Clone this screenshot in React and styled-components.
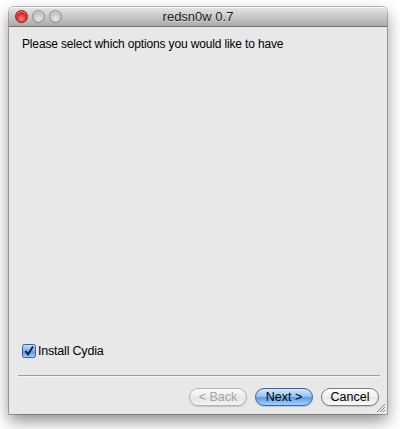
import styled, { createGlobalStyle } from 'styled-components';

const GlobalStyle = createGlobalStyle`
  html, body {
    margin: 0;
    padding: 0;
    background: #ffffff;
  }
  body {
    font-family: "Liberation Sans", "DejaVu Sans", sans-serif;
  }
`;

const Page = styled.div`
  width: 400px;
  height: 429px;
  box-sizing: border-box;
  padding: 7px 13px 15px 9px;
  overflow: hidden;
`;

const Window = styled.div`
  width: 378px;
  height: 407px;
  display: flex;
  flex-direction: column;
  background: #e8e8e8;
  border-radius: 5px 5px 0 0;
  box-shadow: 0 7px 16px rgba(0, 0, 0, 0.45), 0 0 0 1px rgba(0, 0, 0, 0.25);
  position: relative;
`;

const TitleBar = styled.div`
  height: 19px;
  flex: none;
  display: flex;
  align-items: center;
  position: relative;
  border-radius: 5px 5px 0 0;
  background: linear-gradient(#e6e6e6, #c9c9c9 50%, #a9a9a9);
  border-bottom: 1px solid #6f6f6f;
  box-shadow: inset 0 1px 0 rgba(255, 255, 255, 0.7);
`;

const Lights = styled.div`
  display: flex;
  gap: 4px;
  padding-left: 6px;
`;

const Light = styled.span`
  width: 13px;
  height: 13px;
  border-radius: 50%;
  box-sizing: border-box;
  border: 1px solid ${(p) => (p.red ? '#8f1b1b' : '#8a8a8a')};
  background: ${(p) =>
    p.red
      ? 'radial-gradient(circle at 50% 70%, #ff8a8a 0%, #e41c1c 55%, #a30b0b 100%)'
      : 'radial-gradient(circle at 50% 70%, #e9e9e9 0%, #c4c4c4 55%, #9c9c9c 100%)'};
  box-shadow: inset 0 1px 1px rgba(255, 255, 255, 0.6);
`;

const Title = styled.div`
  position: absolute;
  left: 0;
  right: 0;
  text-align: center;
  font-size: 13px;
  color: #1a1a1a;
  text-shadow: 0 1px 0 rgba(255, 255, 255, 0.5);
`;

const Content = styled.div`
  flex: 1;
  display: flex;
  flex-direction: column;
  padding: 10px 7px 8px 9px;
`;

const Prompt = styled.div`
  font-size: 12px;
  letter-spacing: -0.15px;
  color: #000;
  padding-left: 4px;
  line-height: 15px;
`;

const Spacer = styled.div`
  flex: 1;
`;

const CheckRow = styled.label`
  display: flex;
  align-items: center;
  gap: 2px;
  padding-left: 4px;
  font-size: 12.5px;
  letter-spacing: -0.2px;
  color: #000;
  height: 14px;
`;

const Separator = styled.div`
  margin-top: 17px;
  height: 1px;
  background: #9d9d9d;
  border-bottom: 1px solid #f6f6f6;
`;

const Buttons = styled.div`
  display: flex;
  justify-content: flex-end;
  gap: 8px;
  margin-top: 11px;
  padding-right: 1px;
`;

const Button = styled.div`
  width: 58px;
  height: 18px;
  box-sizing: border-box;
  border-radius: 9px;
  display: flex;
  align-items: center;
  justify-content: center;
  font-size: 12.5px;
  border: 1px solid ${(p) => (p.primary ? '#3d64a8' : p.disabled ? '#b2b2b2' : '#7c7c7c')};
  color: ${(p) => (p.disabled ? '#a4a4a4' : '#000')};
  background: ${(p) =>
    p.primary
      ? 'linear-gradient(#d7e9fb, #8fc0f2 50%, #5d9ce8 52%, #9fd1fb)'
      : p.disabled
      ? 'linear-gradient(#fbfbfb, #ececec 50%, #e4e4e4 52%, #f4f4f4)'
      : 'linear-gradient(#ffffff, #f1f1f1 50%, #e6e6e6 52%, #fafafa)'};
  box-shadow: 0 1px 1px rgba(0, 0, 0, 0.15);
`;

const Grip = styled.svg`
  position: absolute;
  right: 1px;
  bottom: 1px;
`;

function CheckBox() {
  return (
    <svg width="14" height="14" viewBox="0 0 14 14">
      <defs>
        <linearGradient id="cb" x1="0" y1="0" x2="0" y2="1">
          <stop offset="0" stopColor="#c8e0fa" />
          <stop offset="0.5" stopColor="#7fb2ec" />
          <stop offset="0.55" stopColor="#5b97e3" />
          <stop offset="1" stopColor="#a5d2fb" />
        </linearGradient>
      </defs>
      <rect x="0.5" y="0.5" width="13" height="13" rx="2" fill="url(#cb)" stroke="#38609e" />
      <path d="M3.5 7 L6 10.5 L11 2.5" fill="none" stroke="#0b1a33" strokeWidth="1.8" />
    </svg>
  );
}

export default function App() {
  return (
    <Page>
      <GlobalStyle />
      <Window>
        <TitleBar>
          <Lights>
            <Light red />
            <Light />
            <Light />
          </Lights>
          <Title>redsn0w 0.7</Title>
        </TitleBar>
        <Content>
          <Prompt>Please select which options you would like to have</Prompt>
          <Spacer />
          <CheckRow>
            <CheckBox />
            Install Cydia
          </CheckRow>
          <Separator />
          <Buttons>
            <Button disabled>&lt; Back</Button>
            <Button primary>Next &gt;</Button>
            <Button>Cancel</Button>
          </Buttons>
        </Content>
        <Grip width="11" height="11" viewBox="0 0 11 11">
          <path d="M10 2 L2 10 M10 5 L5 10 M10 8 L8 10" stroke="#8a8a8a" strokeWidth="1" />
        </Grip>
      </Window>
    </Page>
  );
}
